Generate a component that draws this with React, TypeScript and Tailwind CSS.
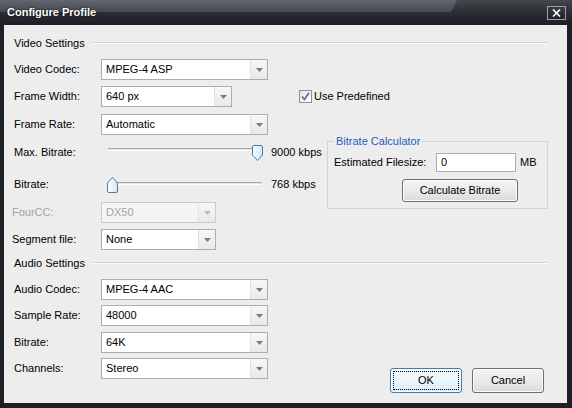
import React from "react";

const Arrow: React.FC<{ disabled?: boolean }> = ({ disabled }) => (
  <div className="flex w-[17px] shrink-0 items-center justify-center border-l border-[#e2e2e2] bg-gradient-to-b from-[#f7f7f7] to-[#e9e9e9]">
    <svg width="7" height="4" viewBox="0 0 7 4">
      <path d="M0 0 H7 L3.5 4 Z" fill={disabled ? "#b8b8b8" : "#7c7c7c"} />
    </svg>
  </div>
);

const Combo: React.FC<{ value: string; className: string; disabled?: boolean }> = ({
  value,
  className,
  disabled,
}) => (
  <div
    className={
      "flex h-[21px] shrink-0 border " +
      (disabled
        ? "border-[#cccccc] bg-[#f4f4f4] text-[#a3a3a3] "
        : "border-[#abadb3] bg-white text-black ") +
      className
    }
  >
    <div className="flex flex-1 items-center px-[4px]">{value}</div>
    <Arrow disabled={disabled} />
  </div>
);

const Thumb: React.FC<{ down?: boolean }> = ({ down }) => (
  <svg width="11" height="16" viewBox="0 0 11 16">
    <defs>
      <linearGradient id={down ? "tg1" : "tg2"} x1="0" y1="0" x2="1" y2="0">
        <stop offset="0" stopColor="#ffffff" />
        <stop offset="1" stopColor="#d4e3f1" />
      </linearGradient>
    </defs>
    <path
      d={
        down
          ? "M0.5 2 Q0.5 0.5 2 0.5 H9 Q10.5 0.5 10.5 2 V10 L5.5 15.5 L0.5 10 Z"
          : "M0.5 14 Q0.5 15.5 2 15.5 H9 Q10.5 15.5 10.5 14 V6 L5.5 0.5 L0.5 6 Z"
      }
      fill={`url(#${down ? "tg1" : "tg2"})`}
      stroke="#3f7fb6"
    />
  </svg>
);

const Slider: React.FC<{ left: boolean }> = ({ left }) => (
  <div className="relative h-[21px] w-[168px] shrink-0">
    <div
      className={
        "absolute left-[7px] h-[3px] w-[154px] border-t border-[#a6a6a6] border-b border-b-white bg-[#e4e4e4] " +
        (left ? "top-[8px]" : "top-[6px]")
      }
    />
    <div className={"absolute top-[3px] " + (left ? "left-[6px]" : "left-[151px]")}>
      <Thumb down={!left} />
    </div>
  </div>
);

const Header: React.FC<{ text: string; className: string }> = ({ text, className }) => (
  <div className={"flex h-[14px] items-center pl-[2px] " + className}>
    <span>{text}</span>
    <div className="ml-[6px] h-[2px] flex-1 border-t border-[#d6d5c8] border-b border-b-[#fbfbf8]" />
  </div>
);

const Row: React.FC<{ label: string; className: string; children: React.ReactNode; dim?: boolean; tight?: boolean }> = ({
  label,
  className,
  children,
  dim,
  tight,
}) => (
  <div className={"flex h-[21px] items-center whitespace-nowrap " + className}>
    <div
      className={
        "shrink-0 " + (tight ? "w-[89px] " : "ml-[2px] w-[87px] ") + (dim ? "text-[#a3a3a3]" : "text-black")
      }
    >
      {label}
    </div>
    {children}
  </div>
);

const Button: React.FC<{ label: string; className: string; focused?: boolean }> = ({
  label,
  className,
  focused,
}) => (
  <div
    className={
      "flex items-center justify-center rounded-[3px] border shadow-[inset_0_0_0_1px_#fcfcfc] " +
      (focused
        ? "border-[#3c7fb1] bg-gradient-to-b from-[#f6fbfe] via-[#edf6fc] to-[#d7ebf8] outline outline-1 outline-dotted outline-black -outline-offset-4 "
        : "border-[#707070] bg-gradient-to-b from-[#f3f3f3] via-[#ebebeb] to-[#dadada] ") +
      className
    }
  >
    {label}
  </div>
);

export default function App() {
  return (
    <div className="flex h-[408px] w-[572px] flex-col bg-[#1d1f24] font-['Liberation_Sans',Arial,sans-serif] text-[11px] text-black">
      {/* title bar */}
      <div className="relative flex h-[25px] items-center bg-gradient-to-b from-[#44474e] via-[#2a2d32] to-[#1d1f24] pl-[7px] pr-[6px]">
        <div className="absolute left-0 top-0 h-[12px] w-[457px] bg-gradient-to-b from-[#62666e] to-[#464950] [clip-path:polygon(0_0,100%_0,98.7%_100%,0_100%)]" />
        <span className="relative text-[11px] font-bold text-white [text-shadow:0_0_2px_#000]">
          Configure Profile
        </span>
        <div className="relative ml-auto flex h-[14px] w-[19px] items-center justify-center border border-[#9ca0a7] bg-gradient-to-b from-[#3a3d43] to-[#1f2126]">
          <svg width="9" height="8" viewBox="0 0 9 8">
            <path d="M1 0.5 L8 7.5 M8 0.5 L1 7.5" stroke="#ffffff" strokeWidth="1.6" />
          </svg>
        </div>
      </div>

      {/* client area */}
      <div className="mx-[4px] mb-[5px] mr-[5px] flex flex-1 flex-col bg-[#ededed] pl-[8px] pr-[19px]">
        <Header text="Video Settings" className="mt-[11px]" />

        <div className="mt-[9px] flex">
          <div className="flex w-[315px] shrink-0 flex-col">
            <Row label="Video Codec:" className="">
              <Combo value="MPEG-4 ASP" className="w-[167px]" />
            </Row>
            <Row label="Frame Width:" className="mt-[6px]">
              <Combo value="640 px" className="w-[131px]" />
              <div className="ml-[67px] flex shrink-0 items-center">
                <div className="flex h-[13px] w-[13px] items-center justify-center border border-[#8e8f8f] bg-gradient-to-br from-[#e4e4e4] to-white">
                  <svg width="9" height="9" viewBox="0 0 9 9">
                    <path d="M1 4.5 L3.5 7.5 L8 0.8" fill="none" stroke="#4a6aa5" strokeWidth="1.6" />
                  </svg>
                </div>
                <span className="ml-[2px]">Use Predefined</span>
              </div>
            </Row>
            <Row label="Frame Rate:" className="mt-[7px]">
              <Combo value="Automatic" className="w-[167px]" />
            </Row>
            <Row label="Max. Bitrate:" className="mt-[7px]">
              <Slider left={false} />
              <span className="ml-[2px]">9000 kbps</span>
            </Row>
            <Row label="Bitrate:" className="mt-[11px]">
              <Slider left={true} />
              <span className="ml-[2px]">768 kbps</span>
            </Row>
            <Row label="FourCC:" className="mt-[7px]" dim tight>
              <Combo value="DX50" className="w-[115px]" disabled />
            </Row>
            <Row label="Segment file:" className="mt-[6px]" tight>
              <Combo value="None" className="w-[115px]" />
            </Row>
          </div>

          <div className="flex flex-1 flex-col">
            <fieldset className="mt-[76px] border border-[#d3d3d3] px-[6px] pb-[6px]">
              <legend className="px-[2px] leading-[13px] text-[#1e5ebd]">Bitrate Calculator</legend>
              <div className="mt-[5px] flex h-[19px] items-center">
                <span className="w-[102px]">Estimated Filesize:</span>
                <div className="flex h-[19px] w-[80px] items-center border border-[#abadb3] bg-white px-[4px]">
                  0
                </div>
                <span className="ml-[4px]">MB</span>
              </div>
              <Button label="Calculate Bitrate" className="ml-[68px] mt-[7px] h-[23px] w-[116px]" />
            </fieldset>
          </div>
        </div>

        <Header text="Audio Settings" className="mt-[6px]" />

        <div className="mt-[9px] flex">
          <div className="flex flex-col">
            <Row label="Audio Codec:" className="">
              <Combo value="MPEG-4 AAC" className="w-[167px]" />
            </Row>
            <Row label="Sample Rate:" className="mt-[5px]">
              <Combo value="48000" className="w-[167px]" />
            </Row>
            <Row label="Bitrate:" className="mt-[6px]">
              <Combo value="64K" className="w-[167px]" />
            </Row>
            <Row label="Channels:" className="mt-[5px]">
              <Combo value="Stereo" className="w-[167px]" />
            </Row>
          </div>
          <div className="ml-auto mr-[4px] flex gap-[10px] pt-[89px]">
            <Button label="OK" className="h-[25px] w-[72px]" focused />
            <Button label="Cancel" className="h-[25px] w-[72px]" />
          </div>
        </div>
      </div>
    </div>
  );
}
